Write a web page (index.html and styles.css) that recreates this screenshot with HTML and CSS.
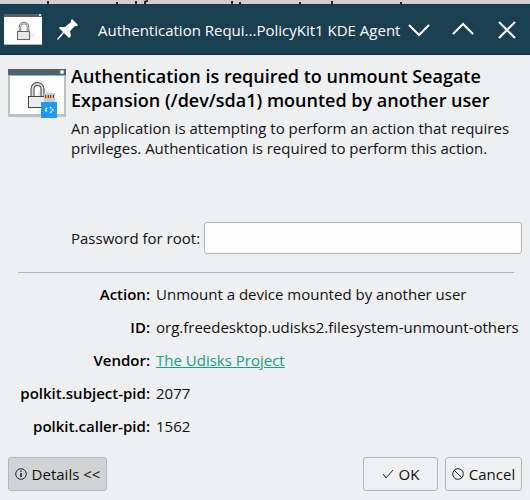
FILE: index.html
```html
<!DOCTYPE html>
<html lang="en">

<head>
  <meta charset="utf-8">
  <title>Authentication Required</title>
  <link rel="stylesheet" href="styles.css">
</head>

<body>
  <!-- sliver of the window behind the dialog -->
  <div class="backdrop" aria-hidden="true">
    <svg viewBox="0 0 530 4">
      <path d="M48 1v3M136 1v3M232 1v3M332 1v3M117 2v2M240 2v2M300 2v2M401 2v2M145 4V2q0-1 3-1" fill="none" stroke="#222" stroke-width="2"/>
    </svg>
  </div>
  <div class="window">
    <header class="titlebar">
      <svg class="app-icon" viewBox="0 0 38 31">
        <rect width="38" height="31" fill="#fcfcfc"/>
        <rect width="38" height="3" fill="#566069"/>
        <circle cx="36" cy="1" r="1" fill="#fff"/>
        <path d="M0 30.500H38" stroke="#aeb4b8"/>
        <path d="M24 15l6 6-5 5H14z" fill="#eee"/>
        <path d="M16 17v-4a4 4 0 0 1 8 0v4" fill="none" stroke="#666" stroke-width="2.400"/>
        <path d="M16 17v-4a4 4 0 0 1 8 0v4" fill="none" stroke="#ddd" stroke-width="1"/>
        <rect x="13.500" y="17.500" width="12" height="8" fill="#e6e6e6" stroke="#666"/>
      </svg>
      <svg class="pin" viewBox="0 0 22 22">
        <path d="M15 0l6 6-1 1-2 0-5 5 1 5-2 2-5-5-6 7-1-1 6-7-4-4 1-1 5 0 6-5 0-2z" fill="#fff"/>
      </svg>
      <h1 class="title">Authentication Requi...PolicyKit1 KDE Agent</h1>
      <div class="controls">
        <button class="control" aria-label="Minimize"><svg viewBox="0 0 22 22"><path d="M1 6l10 10L21 6"/></svg></button>
        <button class="control" aria-label="Maximize"><svg viewBox="0 0 22 22"><path d="M1 15L11 5l10 10"/></svg></button>
        <button class="control" aria-label="Close"><svg viewBox="0 0 22 22"><path d="M3 3l16 16M19 3L3 19"/></svg></button>
      </div>
    </header>

    <form class="dialog">
      <div class="intro">
        <svg class="auth-icon" viewBox="0 0 60 50">
          <rect x="0" y="1" width="58" height="47" fill="#bcc1c4"/>
          <rect x="2" y="7" width="54" height="38" fill="#fcfcfc"/>
          <rect x="0" width="58" height="6" fill="#566069"/>
          <rect x="0" y="6" width="58" height="1" fill="#6cc0ee"/>
          <circle cx="54" cy="3" r="2" fill="#fff"/>
          <path d="M34 17l10 9-6 12H22z" fill="#e9e9e9"/>
          <path d="M24.500 27v-7a5 5 0 0 1 10 0v7" fill="none" stroke="#444" stroke-width="4"/>
          <path d="M24.500 27v-7a5 5 0 0 1 10 0v7" fill="none" stroke="#ddd" stroke-width="2"/>
          <rect x="20.500" y="27.500" width="18" height="11" fill="#eee" stroke="#444"/>
          <rect x="36" y="24" width="11" height="9" fill="#c8cacb"/>
          <path d="M37 26h4v3h-4zM42 26h4v3h-4z" fill="#4d4d4d"/>
          <path d="M38 26h2v3h-2zM43 26h2v3h-2z" fill="#f5a33b"/>
          <rect x="33" y="33" width="16" height="16" fill="#1d99f3"/>
          <path d="M39 39l-2 2 2 2M42 38l3 3-3 3" fill="none" stroke="#fff" stroke-width="1.500" stroke-dasharray="2 1"/>
        </svg>
        <div class="intro-text">
          <h2>Authentication is required to unmount Seagate Expansion (/dev/sda1) mounted by another user</h2>
          <p>An application is attempting to perform an action that requires privileges. Authentication is required to perform this action.</p>
        </div>
      </div>

      <div class="password">
        <label for="password">Password for root:</label>
        <input type="password" id="password">
      </div>

      <hr>

      <dl class="details">
        <dt>Action:</dt>
        <dd>Unmount a device mounted by another user</dd>
        <dt>ID:</dt>
        <dd>org.freedesktop.udisks2.filesystem-unmount-others</dd>
        <dt>Vendor:</dt>
        <dd><a href="#">The Udisks Project</a></dd>
        <dt>polkit.subject-pid:</dt>
        <dd>2077</dd>
        <dt>polkit.caller-pid:</dt>
        <dd>1562</dd>
      </dl>

      <div class="buttons">
        <button type="button" class="btn details-btn">
          <svg viewBox="0 0 12 12"><circle cx="6" cy="6" r="5.300"/><path d="M6 5v4M6 2.500v1.200" stroke-width="1.600"/></svg>Details &lt;&lt;</button>
        <button type="submit" class="btn ok-btn">
          <svg viewBox="0 0 12 12"><path d="M1 6l3 4 7-8"/></svg>OK</button>
        <button type="button" class="btn cancel-btn">
          <svg viewBox="0 0 12 12"><circle cx="6" cy="6" r="5.300"/><path d="M2 2l8 8"/></svg>Cancel</button>
      </div>
    </form>
  </div>
</body>

</html>
```
FILE: styles.css
```css
body {
    margin: 0;
    font-family: "Open Sans", "Noto Sans", sans-serif;
    font-size: 15px;
    line-height: 20px;
    color: #111;
    background-color: #eeeff1;
}

.backdrop {
    height: 4px;
    background-color: #cfcfcf;
}

.backdrop svg {
    display: block;
    height: 4px;
}

.titlebar {
    display: flex;
    align-items: center;
    height: 51px;
    box-sizing: border-box;
    padding: 0 12px 0 4px;
    background-color: #1a3f50;
    border-top: 1px solid #0c3b50;
    border-bottom: 1px solid #062c40;
}

.app-icon {
    width: 38px;
    height: 31px;
}

.pin {
    width: 22px;
    height: 22px;
    margin-left: 15px;
}

.title {
    flex: 1;
    margin: 0 0 0 19px;
    font-size: 15px;
    font-weight: normal;
    color: #fcfcfc;
    white-space: nowrap;
}

.controls {
    display: flex;
    gap: 22px;
}

.control {
    width: 22px;
    height: 22px;
    padding: 0;
    border: 0;
    background: none;
}

.control svg {
    display: block;
    fill: none;
    stroke: #fff;
    stroke-width: 2;
}

.dialog {
    padding: 9px 8px;
}

.intro {
    display: flex;
    gap: 3px;
}

.auth-icon {
    flex: none;
    width: 60px;
    height: 50px;
    margin-top: 5px;
}

.intro-text {
    height: 158px;
}

h2 {
    margin: 0 0 6px;
    font-size: 18px;
    font-weight: 600;
    line-height: 24px;
    color: #000;
}

p {
    margin: 0;
}

.password {
    display: flex;
    align-items: center;
    gap: 4px;
    margin-left: 63px;
}

.password input {
    flex: 1;
    min-width: 0;
    height: 32px;
    box-sizing: border-box;
    border: 1px solid #b3b5b6;
    border-radius: 3px;
    background-color: #fcfcfc;
}

hr {
    margin: 18px 8px 11px 10px;
    border: 0;
    border-top: 1px solid #b5b6b8;
}

.details {
    display: grid;
    grid-template-columns: 142px 1fr;
    gap: 13px 6px;
    margin: 0;
}

dt {
    font-weight: 600;
    color: #000;
    text-align: right;
}

dd {
    margin: 0;
    white-space: nowrap;
}

a {
    color: #16a085;
}

.buttons {
    display: flex;
    gap: 7px;
    margin-top: 21px;
}

.btn {
    display: flex;
    align-items: center;
    justify-content: center;
    gap: 5px;
    height: 34px;
    padding: 0;
    border: 1px solid #b5b6b8;
    border-radius: 3px;
    background-color: #eff0f1;
    color: #111;
    font: inherit;
}

.btn svg {
    width: 12px;
    height: 12px;
    fill: none;
    stroke: #232629;
}

.details-btn {
    width: 99px;
    margin-right: auto;
    background-color: #d2d3d4;
}

.ok-btn {
    width: 75px;
}

.cancel-btn {
    width: 77px;
}
```
